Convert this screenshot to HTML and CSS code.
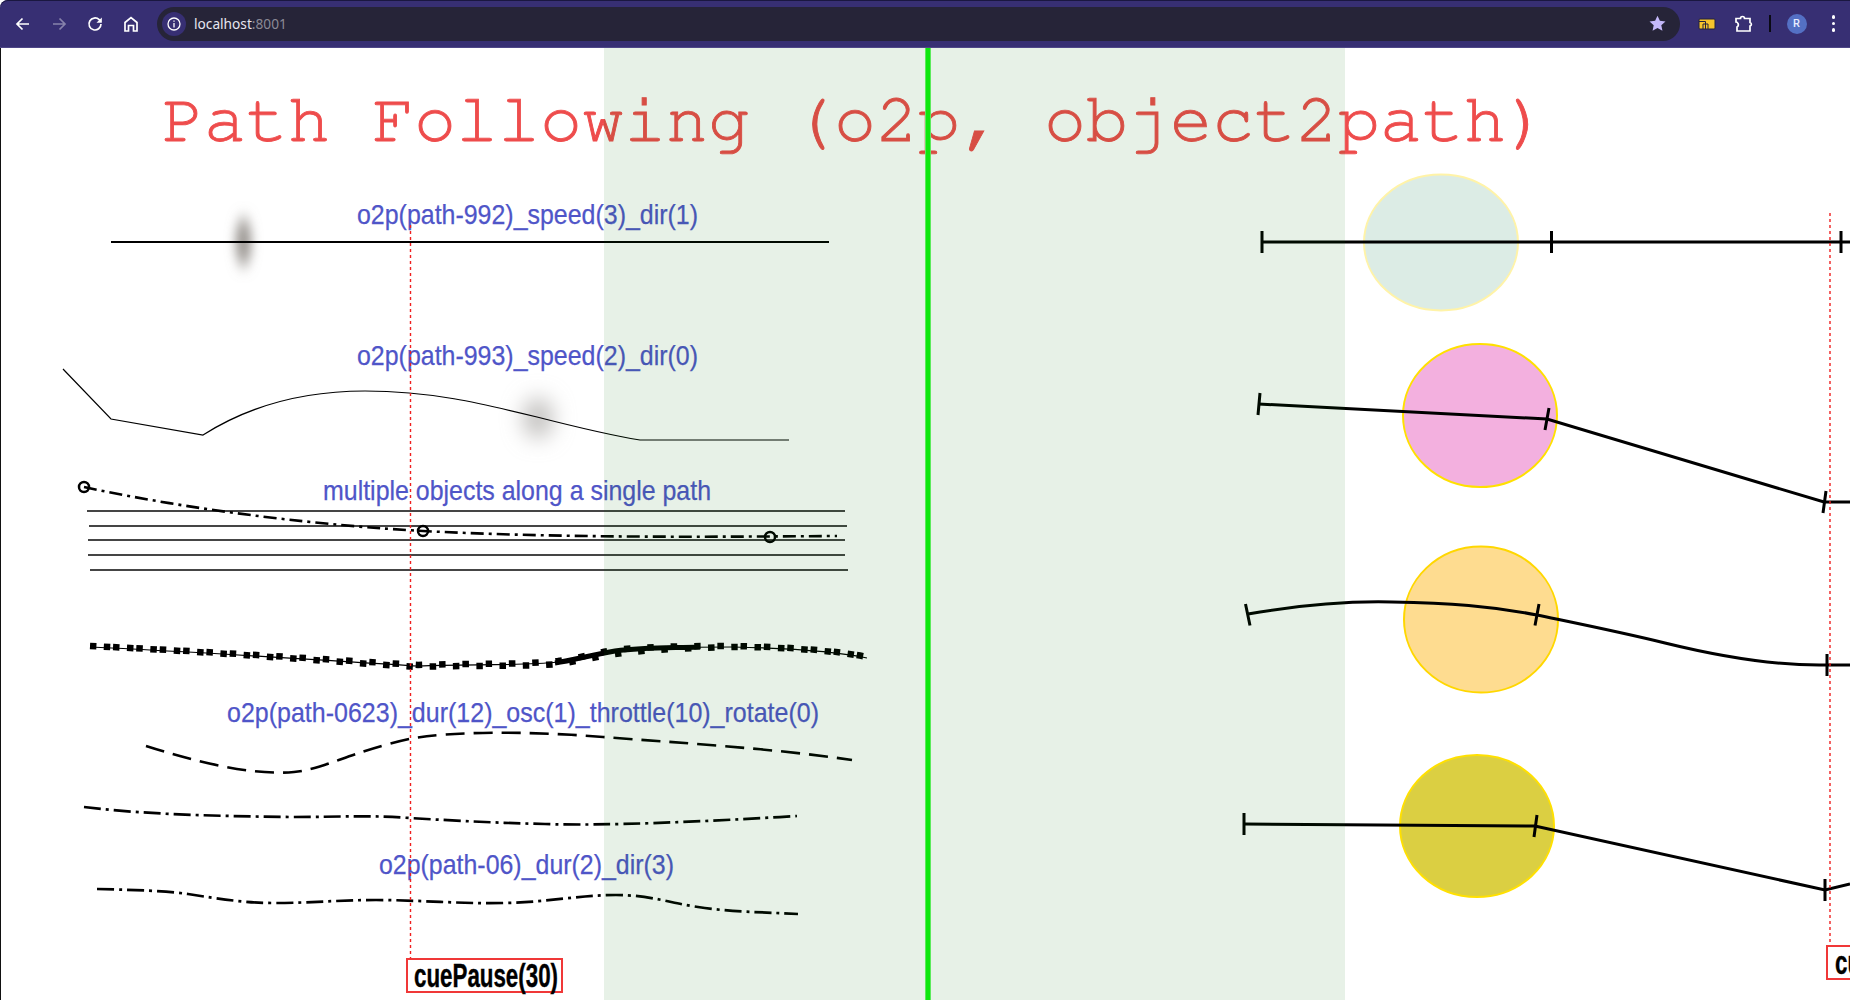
FILE: index.html
```html
<!DOCTYPE html>
<html lang="en">
<head>
<meta charset="utf-8">
<title>Path Following</title>
<link rel="stylesheet" href="styles.css">
</head>
<body>
<header class="toolbar">
  <nav class="nav-buttons">
    <svg class="tool-icon" viewBox="0 0 20 20"><path class="ico-line" d="M16 10H4.500M9.500 4.500 4 10l5.500 5.500"/></svg>
    <svg class="tool-icon dim" viewBox="0 0 20 20"><path class="ico-line" d="M4 10h11.500M10.500 4.500 16 10l-5.500 5.500"/></svg>
    <svg class="tool-icon" viewBox="0 0 20 20"><path class="ico-line" d="M16 10a6 6 0 1 1-1.800-4.300L16 7.500"/><path class="ico-fill" d="M16.800 3.500v5.300h-5.300z"/></svg>
    <svg class="tool-icon" viewBox="0 0 20 20"><path class="ico-line" d="M4 17V8.500L10 3.500l6 5V17h-3.500v-5.500h-5V17z"/></svg>
  </nav>
  <div class="omnibox">
    <span class="site-info"><svg class="info-icon" viewBox="0 0 16 16"><circle class="ico-thin" cx="8" cy="8" r="6"/><path class="ico-thin" d="M8 7v4.500M8 4.500v1.200"/></svg></span>
    <span class="url">localhost<span class="url-port">:8001</span></span>
    <svg class="star" viewBox="0 0 20 20"><path d="M10 1.800l2.500 5.400 5.900.7-4.400 4 1.200 5.800L10 14.800l-5.200 2.900L6 11.900l-4.400-4 5.900-.7z"/></svg>
  </div>
  <div class="actions">
    <svg class="ext-icon" viewBox="0 0 18 14"><rect class="ext-body" x="1" y="2" width="16" height="10" rx="1"/><path class="ext-mark" d="M1 4.500h6.500v7.500M5 12V7h5v5"/></svg>
    <svg class="puzzle" viewBox="0 0 20 20"><path class="ico-line" d="M3 4.500h4.500a2 2 0 0 1 4 0H17v4a1.800 1.800 0 0 1 0 3.500v5H4v-4a2.500 2.500 0 0 0 1-3.500 2.500 2.500 0 0 0-2-1.500z"/></svg>
    <span class="divider"></span>
    <span class="avatar">R</span>
    <span class="kebab"><i></i><i></i><i></i></span>
  </div>
</header>

<main class="stage">
  <svg class="scene" viewBox="0 48 1850 952" xmlns="http://www.w3.org/2000/svg">
    <defs>
      <filter id="blur-a" x="-300%" y="-100%" width="700%" height="300%"><feGaussianBlur stdDeviation="5.500 8"/></filter>
      <filter id="blur-b" x="-100%" y="-100%" width="300%" height="300%"><feGaussianBlur stdDeviation="11"/></filter>
    </defs>

    <rect class="edge" x="0" y="48" width="1" height="952"/>

    <text class="title" x="162" y="141">Path Following (o2p, object2path)</text>

    <ellipse class="blob-a" cx="243.500" cy="242" rx="8" ry="24" filter="url(#blur-a)"/>
    <ellipse class="blob-b" cx="538" cy="418" rx="14" ry="20" filter="url(#blur-b)"/>

    <path class="thin" d="M111 242H829"/>
    <path class="hair" d="M63 369 111 419 203 435C255 402 310 391 365 391C430 391 480 403 537 417C580 428 615 436 640 440H789"/>

    <path class="staff" d="M87 511H845"/>
    <path class="staff" d="M89 526H847"/>
    <path class="staff" d="M88 540H845"/>
    <path class="staff" d="M88 555H845"/>
    <path class="staff" d="M90 570H848"/>

    <path class="dashdot" d="M84 487C200 512 330 526 423 531C560 538 700 537 837 536"/>
    <circle class="ring" cx="84" cy="487" r="5"/>
    <circle class="ring" cx="423" cy="531" r="5"/>
    <circle class="ring" cx="770" cy="537" r="5"/>

    <path class="hair" d="M90 647C200 652 320 660 418 666C470 664 520 666 558 662C585 658 595 654 615 651C650 647 700 647 733 647C780 648 830 650 867 658"/>
    <path class="thick" d="M555 663C575 660 590 655 615 651C645 647 670 648 700 647"/>
    <path class="squares" d="M90 646C200 651 320 659 418 665C470 663 520 665 558 661C585 657 595 653 615 650C650 646 700 646 733 646C780 647 830 649 867 657"/>
    <path class="squares second" d="M90 646C200 651 320 661 418 667C470 665 520 667 558 664C585 660 595 657 615 654C650 649 700 648 733 647C780 647 830 650 867 657"/>

    <path class="dashed" d="M146 746C190 760 250 776 294 772C325 769 350 752 409 739C450 731 530 731 603 737C680 743 770 748 852 760"/>
    <path class="dashdot-b" d="M84 807C150 815 220 816 290 817C340 817 370 815 409 818C460 821 500 823 545 824C600 826 700 822 797 816"/>
    <path class="dashdot-b" d="M97 889C140 890 165 891 188 894C220 899 245 903 274 903C310 903 340 900 376 900C420 900 460 904 504 903C550 902 580 895 616 895C650 895 670 903 698 907C730 912 760 912 798 914"/>

    <text class="label" x="357" y="224" textLength="341" lengthAdjust="spacingAndGlyphs">o2p(path-992)_speed(3)_dir(1)</text>
    <text class="label" x="357" y="365" textLength="341" lengthAdjust="spacingAndGlyphs">o2p(path-993)_speed(2)_dir(0)</text>
    <text class="label" x="323" y="500" textLength="388" lengthAdjust="spacingAndGlyphs">multiple objects along a single path</text>
    <text class="label" x="227" y="722" textLength="592" lengthAdjust="spacingAndGlyphs">o2p(path-0623)_dur(12)_osc(1)_throttle(10)_rotate(0)</text>
    <text class="label" x="379" y="874" textLength="295" lengthAdjust="spacingAndGlyphs">o2p(path-06)_dur(2)_dir(3)</text>

    <path class="cue-line" d="M410.500 225V958"/>
    <rect class="cue-box" x="407" y="959" width="155" height="33"/>
    <text class="cue-text" x="414" y="987" textLength="144" lengthAdjust="spacingAndGlyphs">cuePause(30)</text>

    <ellipse class="orb mint" cx="1441" cy="242.500" rx="77" ry="68"/>
    <ellipse class="orb pink" cx="1480" cy="415.500" rx="77" ry="71.500"/>
    <ellipse class="orb amber" cx="1481" cy="619.500" rx="77" ry="73"/>
    <ellipse class="orb olive" cx="1477" cy="826" rx="77" ry="71"/>

    <path class="rail" d="M1262 242H1850"/>
    <path class="tick" d="M1262 231V253M1551.500 231V253M1841 231V253"/>

    <path class="rail" d="M1258.500 404 1547 419 1824 502H1850"/>
    <path class="tick" d="M1260 393 1258 415M1549 408 1545 430M1826 491 1823 513"/>

    <path class="rail" d="M1248 614C1300 605 1350 601 1392 602C1450 603 1490 606 1537 615C1580 624 1620 632 1665 643C1730 659 1780 666 1827 665H1850"/>
    <path class="tick" d="M1245.500 604 1250 625.500M1539 604 1535 625.500M1827 654V676"/>

    <path class="rail" d="M1244 824 1535 826 1825 890 1850 884"/>
    <path class="tick" d="M1244 813V835M1537 815 1534 837M1825 879V901"/>

    <path class="cue-line" d="M1830 213V945"/>
    <rect class="cue-box" x="1827" y="946" width="60" height="33"/>
    <text class="cue-text" x="1835" y="974" textLength="144" lengthAdjust="spacingAndGlyphs">cuePause(30)</text>

    <rect class="band" x="604" y="48" width="741" height="952"/>
    <rect class="green-glow" x="925" y="48" width="6" height="952"/>
    <rect class="green-line" x="926" y="48" width="4" height="952"/>
  </svg>
</main>
</body>
</html>
```

FILE: styles.css
```css
* { box-sizing: border-box; }

html, body {
  margin: 0;
  height: 100%;
  overflow: hidden;
  background: #fff;
}

.toolbar {
  display: flex;
  align-items: center;
  height: 48px;
  padding: 0 0 0 13px;
  background: #372f73;
  border-bottom: 1px solid #4f4788;
  border-top-left-radius: 8px;
  box-shadow: inset 0 1px 0 #1a1740;
}

.nav-buttons {
  display: flex;
  align-items: center;
  gap: 16px;
  width: 144px;
}

.tool-icon {
  width: 20px;
  height: 20px;
  flex: none;
}

.tool-icon.dim { opacity: 0.4; }

.ico-line {
  fill: none;
  stroke: #fff;
  stroke-width: 1.7;
}

.ico-fill { fill: #fff; }

.ico-thin {
  fill: none;
  stroke: #fff;
  stroke-width: 1.3;
}

.omnibox {
  display: flex;
  align-items: center;
  width: 1523px;
  height: 34px;
  padding: 0 13px 0 5px;
  background: #262438;
  border-radius: 17px;
}

.site-info {
  display: flex;
  align-items: center;
  justify-content: center;
  width: 24px;
  height: 24px;
  margin-right: 8px;
  background: #372f73;
  border-radius: 50%;
}

.info-icon {
  width: 16px;
  height: 16px;
}

.url {
  flex: 1;
  font: 13.700px "Noto Sans", sans-serif;
  color: #e6e6f0;
}

.url-port { color: #8b8a96; }

.star {
  width: 19px;
  height: 19px;
  fill: #c4b8fa;
}

.actions {
  display: flex;
  align-items: center;
  flex: 1;
  padding-left: 18px;
}

.ext-icon {
  width: 18px;
  height: 14px;
  margin-right: 17px;
}

.ext-body {
  fill: #f6c42c;
  stroke: #25233c;
  stroke-width: 1;
}

.ext-mark {
  fill: none;
  stroke: #25233c;
  stroke-width: 1;
}

.puzzle {
  width: 20px;
  height: 20px;
  margin-right: 16px;
}

.divider {
  width: 1.500px;
  height: 17px;
  margin-right: 16px;
  background: #0a0a14;
}

.avatar {
  display: flex;
  align-items: center;
  justify-content: center;
  width: 20px;
  height: 20px;
  margin-right: 25px;
  background: #5470c4;
  border-radius: 50%;
  font: 500 11px Roboto, sans-serif;
  color: #e8ecff;
}

.kebab {
  display: flex;
  flex-direction: column;
  gap: 3px;
}

.kebab i {
  width: 3.500px;
  height: 3.500px;
  background: #fff;
  border-radius: 50%;
}

.stage {
  height: 952px;
}

.scene {
  display: block;
  width: 1850px;
  height: 952px;
}

.band {
  fill: #006e00;
  fill-opacity: 0.095;
}

.edge { fill: #111; }
.green-line { fill: #0ee80e; }
.green-glow { fill: #5cea5c; }

.title {
  font: 70px "FreeMono", "Nimbus Mono PS", "Nimbus Mono L", "Courier 10 Pitch", "Liberation Mono", monospace;
  fill: #ee4c4c;
  stroke: #ee4c4c;
  stroke-width: 0.9;
}

.label {
  font: 28px "Liberation Sans", sans-serif;
  fill: #4f55c8;
  stroke: #4f55c8;
  stroke-width: 0.25;
}

.cue-text {
  font: bold 33px "Liberation Sans Narrow", "Liberation Sans", sans-serif;
  fill: #000;
  stroke: #000;
  stroke-width: 0.4;
}

.cue-box {
  fill: #fff;
  stroke: #f03838;
  stroke-width: 2;
}

.cue-line {
  fill: none;
  stroke: #f02020;
  stroke-width: 1.400;
  stroke-dasharray: 3 3;
}

.blob-a { fill: #9a9591; }
.blob-b { fill: #bcbab8; }

.thin, .hair, .staff, .dashdot, .thick, .squares, .dashed, .dashdot-b, .ring, .rail, .tick {
  fill: none;
  stroke: #000;
}

.thin { stroke-width: 2; }
.hair { stroke-width: 1.200; }

.staff {
  stroke: #454545;
  stroke-width: 2.200;
}

.dashdot {
  stroke-width: 2.600;
  stroke-dasharray: 13 5 3 5;
}

.ring { stroke-width: 2.500; }
.thick { stroke-width: 5; }

.squares {
  stroke-width: 6.500;
  stroke-dasharray: 6.500 16.800;
}

.squares.second { stroke-dashoffset: -14; }

.dashed {
  stroke-width: 2.600;
  stroke-dasharray: 19 9;
}

.dashdot-b {
  stroke-width: 2.700;
  stroke-dasharray: 17 5 3 5;
}

.orb { stroke-width: 2; }
.mint { fill: #dcece5; stroke: #fff3a8; }
.pink { fill: #f3b0df; stroke: #ffe000; }
.amber { fill: #fedc90; stroke: #ffd700; }
.olive { fill: #dbcf42; stroke: #ffe000; }

.rail { stroke-width: 3; }
.tick { stroke-width: 3; }
```
